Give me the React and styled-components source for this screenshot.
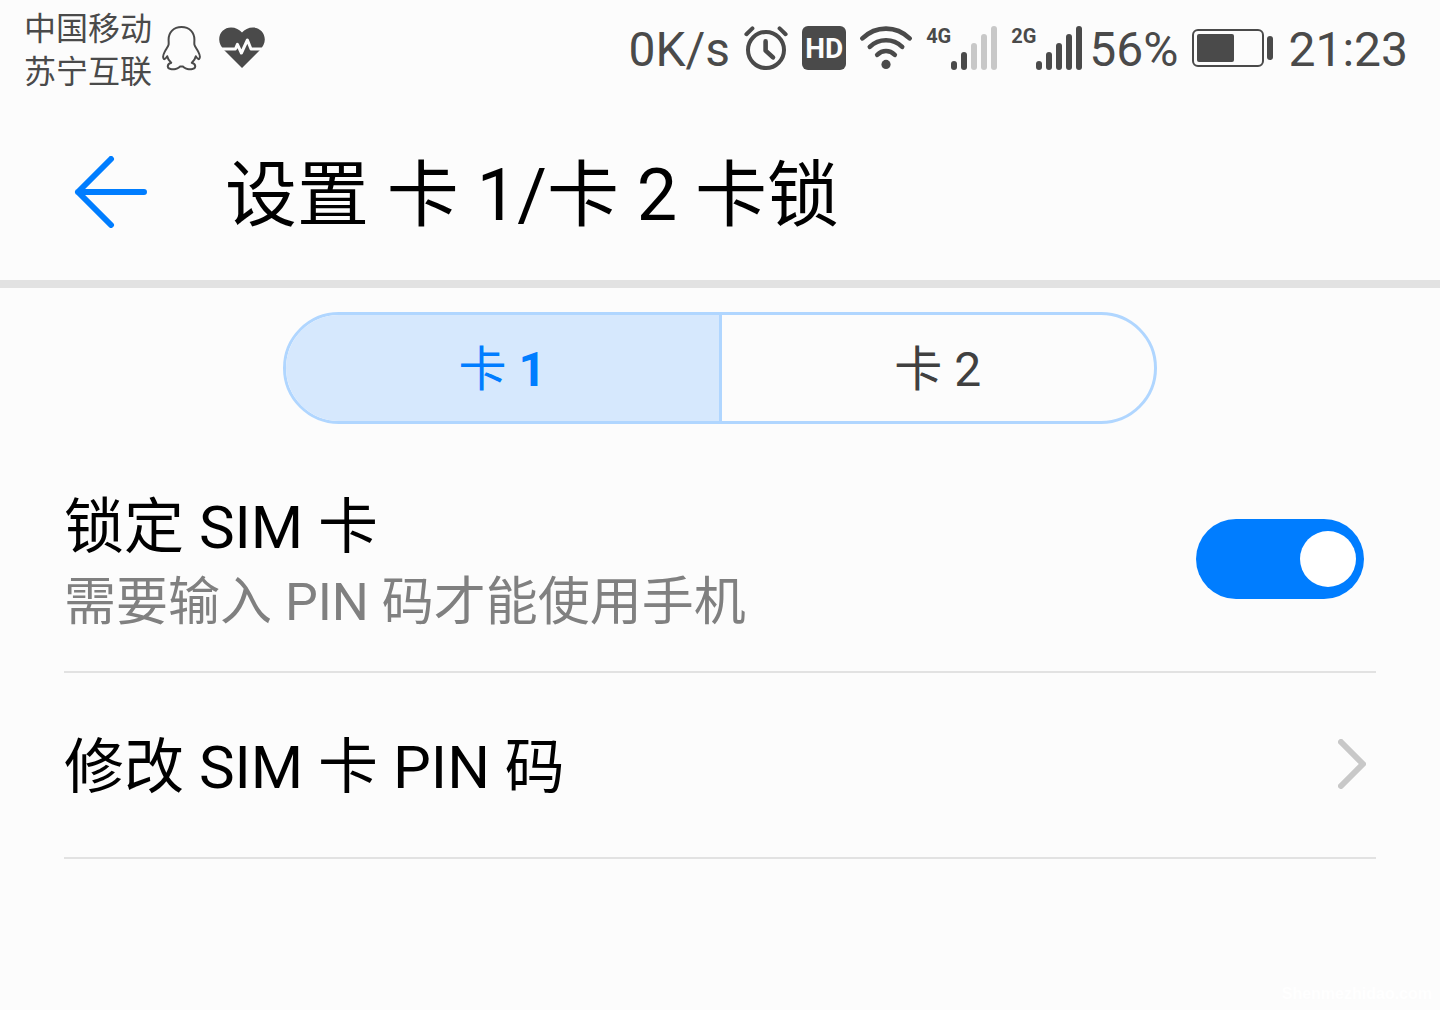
import React, { useState } from "react";
import styled, { createGlobalStyle } from "styled-components";

const tabs = ["1", "2"];

const QQIcon = () => (
  <svg width="39" height="45" viewBox="0 0 39 45" fill="none" stroke="#4a4a4a" strokeWidth="2" strokeLinejoin="round">
    <path d="M19.5 1C11.5 1 6.6 6.4 6.6 13.5C6.6 15.5 6.8 17 6.6 18.6C6.3 20.4 4.4 22.6 2.8 25.6C1 29 .9 32 1.9 33C2.8 33.6 4.3 31.6 5.2 30.2C5.8 33 7.2 35 9.2 36.8C6.8 37.6 5.6 38.8 5.8 40.6C6.2 43.4 10.4 43.6 13.6 43C16.2 42.6 17.2 41 18.4 40.4H20.6C21.8 41 22.8 42.6 25.4 43C28.6 43.6 32.8 43.4 33.2 40.6C33.4 38.8 32.2 37.6 29.8 36.8C31.8 35 33.2 33 33.8 30.2C34.7 31.6 36.2 33.6 37.1 33C38.1 32 38 29 36.2 25.6C34.6 22.6 32.7 20.4 32.4 18.6C32.2 17 32.4 15.5 32.4 13.5C32.4 6.4 27.5 1 19.5 1Z" />
  </svg>
);

const HeartIcon = () => (
  <svg width="46" height="42" viewBox="0 0 46 42">
    <path
      fill="#4a4a4a"
      d="M23 41L5.5 23.5C2 20 .2 16.5 .2 12.6C.2 5.4 5.6.6 12 .6C16.6.6 20.4 2.6 23 5.6C25.6 2.6 29.4.6 34 .6C40.4.6 45.8 5.4 45.8 12.6C45.8 16.5 44 20 40.5 23.5Z"
    />
    <path
      fill="none"
      stroke="#fcfcfc"
      strokeWidth="3"
      strokeLinejoin="round"
      d="M0 22H16.4L18.4 17.4L22.4 26L28.4 13L32 22H46"
    />
  </svg>
);

const AlarmIcon = () => (
  <svg width="44" height="44" viewBox="0 0 44 44" fill="none" stroke="#4a4a4a" strokeLinecap="round" strokeLinejoin="round">
    <circle cx="22" cy="24" r="18" strokeWidth="4" />
    <path strokeWidth="4.6" d="M21.6 15.4V24.6L29 31.4" />
    <path strokeWidth="4" d="M2.4 8.2L8.4 2.4M41.6 8.2L35.6 2.4" />
  </svg>
);

const WifiIcon = () => (
  <svg width="52" height="44" viewBox="0 0 52 44" fill="none" stroke="#4a4a4a" strokeWidth="4.6" strokeLinecap="round">
    <path d="M2.4 12.4C16 -.6 36 -.6 49.6 12.4" />
    <path d="M9.8 20.8C19 12 33 12 42.2 20.8" />
    <path d="M17.2 28.8C22.4 23.8 29.6 23.8 34.8 28.8" />
    <circle cx="26" cy="38.4" r="4.6" fill="#4a4a4a" stroke="none" />
  </svg>
);

const SignalBars = ({ level }) => (
  <svg width="46" height="44" viewBox="0 0 46 44">
    {[9, 18, 27, 36, 44].map((height, i) => (
      <rect key={height} x={i * 10} y={44 - height} width="6" height={height} rx="3" fill={i < level ? "#4a4a4a" : "#c8c8c8"} />
    ))}
  </svg>
);

const BatteryIcon = () => (
  <svg width="82" height="38" viewBox="0 0 82 38">
    <rect x="1" y="1" width="70" height="36" rx="5" fill="none" stroke="#4a4a4a" strokeWidth="2" />
    <rect x="5" y="5" width="37" height="28" rx="2" fill="#4a4a4a" />
    <rect x="75" y="7" width="6" height="24" rx="3" fill="#4a4a4a" />
  </svg>
);

const BackIcon = () => (
  <svg width="73" height="72" viewBox="0 0 73 72" fill="none" stroke="#007dff" strokeWidth="6" strokeLinecap="round" strokeLinejoin="round">
    <path d="M37 3L4 36L37 69M4 36H70" />
  </svg>
);

const ChevronIcon = () => (
  <svg width="28" height="50" viewBox="0 0 28 50" fill="none" stroke="#c8c8c8" strokeWidth="6" strokeLinecap="round" strokeLinejoin="round">
    <path d="M3 3L25 25L3 47" />
  </svg>
);

const App = () => {
  const [activeTab, setActiveTab] = useState("1");
  const [locked, setLocked] = useState(true);

  return (
    <Page>
      <GlobalStyle />
      <StatusBar>
        <Notifications>
          <Carrier>
            <span>中国移动</span>
            <span>苏宁互联</span>
          </Carrier>
          <QQIcon />
          <HeartWrap>
            <HeartIcon />
          </HeartWrap>
        </Notifications>
        <SystemStatus>
          <StatusText>0K/s</StatusText>
          <AlarmIcon />
          <HdBadge>HD</HdBadge>
          <WifiIcon />
          <Signal>
            <Network>4G</Network>
            <SignalBars level={2} />
          </Signal>
          <SignalAndCharge>
            <Signal>
              <Network>2G</Network>
              <SignalBars level={5} />
            </Signal>
            <StatusText>56%</StatusText>
          </SignalAndCharge>
          <BatteryIcon />
          <StatusText>21:23</StatusText>
        </SystemStatus>
      </StatusBar>

      <Header>
        <BackButton type="button" aria-label="返回">
          <BackIcon />
        </BackButton>
        <Title>设置 卡 1/卡 2 卡锁</Title>
      </Header>

      <main>
        <TabList role="tablist">
          {tabs.map((tab) => (
            <Tab
              key={tab}
              type="button"
              role="tab"
              aria-selected={activeTab === tab}
              $active={activeTab === tab}
              onClick={() => setActiveTab(tab)}
            >
              卡 <TabNumber $active={activeTab === tab}>{tab}</TabNumber>
            </Tab>
          ))}
        </TabList>

        <Settings>
          <LockRow htmlFor="simLock">
            <RowText>
              <RowTitle>锁定 SIM 卡</RowTitle>
              <RowHint>需要输入 PIN 码才能使用手机</RowHint>
            </RowText>
            <Switch
              type="checkbox"
              role="switch"
              id="simLock"
              checked={locked}
              onChange={(e) => setLocked(e.target.checked)}
            />
          </LockRow>
          <PinRow type="button">
            <RowTitle>修改 SIM 卡 PIN 码</RowTitle>
            <ChevronWrap>
              <ChevronIcon />
            </ChevronWrap>
          </PinRow>
        </Settings>
      </main>

      <Footer>Shenmezhidao.com</Footer>
    </Page>
  );
};

const GlobalStyle = createGlobalStyle`
  * {
    box-sizing: border-box;
  }

  body {
    margin: 0;
    background: #fcfcfc;
    color: #000;
    font-family: Roboto, "Noto Sans CJK SC", sans-serif;
  }

  button {
    margin: 0;
    padding: 0;
    border: 0;
    background: none;
    color: inherit;
    font: inherit;
    cursor: pointer;
  }

  svg {
    display: block;
    flex-shrink: 0;
  }
`;

const Page = styled.div`
  display: flex;
  flex-direction: column;
  min-height: 100vh;
`;

const StatusBar = styled.div`
  display: flex;
  align-items: center;
  justify-content: space-between;
  height: 96px;
  padding: 0 32px 0 24px;
  color: #4a4a4a;
`;

const Notifications = styled.div`
  display: flex;
  align-items: center;
  gap: 10px;
`;

const SystemStatus = styled.div`
  display: flex;
  align-items: center;
  gap: 14px;
`;

const Carrier = styled.div`
  display: flex;
  flex-direction: column;
  padding-top: 6px;
  font-size: 32px;
  line-height: 43px;
`;

const HeartWrap = styled.span`
  margin-left: 8px;
`;

const StatusText = styled.span`
  padding-top: 4px;
  font-size: 48px;
  line-height: 56px;
`;

const HdBadge = styled.span`
  display: flex;
  align-items: center;
  justify-content: center;
  width: 44px;
  height: 44px;
  border-radius: 6px;
  background: #4a4a4a;
  color: #fcfcfc;
  font-size: 28px;
  font-weight: 700;
`;

const Signal = styled.div`
  display: flex;
  align-items: flex-start;
`;

const SignalAndCharge = styled.div`
  display: flex;
  align-items: center;
  gap: 7px;
`;

const Network = styled.span`
  font-size: 20px;
  font-weight: 700;
  line-height: 20px;
`;

const Header = styled.header`
  display: flex;
  align-items: flex-start;
  gap: 78px;
  padding: 60px 74px 44px;
  border-bottom: 8px solid #e2e2e2;
`;

const BackButton = styled.button`
  flex-shrink: 0;
`;

const Title = styled.h1`
  margin: 0;
  font-size: 72px;
  font-weight: 400;
  line-height: 80px;
`;

const TabList = styled.div`
  display: flex;
  max-width: 874px;
  height: 112px;
  margin: 24px auto 0;
  border: 3px solid #b0d6ff;
  border-radius: 56px;
  overflow: hidden;
`;

const Tab = styled.button`
  flex: 1;
  padding-top: 3px;
  background: ${({ $active }) => ($active ? "#d6e8fd" : "transparent")};
  color: ${({ $active }) => ($active ? "#007dff" : "#404040")};
  font-size: 48px;
  line-height: 56px;

  & + & {
    border-left: 3px solid #b0d6ff;
  }
`;

const TabNumber = styled.span`
  font-weight: ${({ $active }) => ($active ? 700 : 400)};
`;

const Settings = styled.div`
  padding: 0 64px;
`;

const LockRow = styled.label`
  display: flex;
  align-items: center;
  justify-content: space-between;
  padding: 66px 12px 31px 0;
  border-bottom: 2px solid #e2e2e2;
`;

const PinRow = styled.button`
  display: flex;
  align-items: center;
  justify-content: space-between;
  width: 100%;
  padding: 57px 10px 51px 0;
  border-bottom: 2px solid #e2e2e2;
  text-align: left;
`;

const RowText = styled.span`
  display: flex;
  flex-direction: column;
`;

const RowTitle = styled.span`
  font-size: 60px;
  line-height: 76px;
`;

const RowHint = styled.span`
  color: #808080;
  font-size: 52px;
  line-height: 74px;
`;

const Switch = styled.input`
  flex-shrink: 0;
  appearance: none;
  width: 168px;
  height: 80px;
  margin: 0 0 12px;
  padding: 12px 8px;
  border-radius: 40px;
  background: #c8c8c8;
  cursor: pointer;

  &::before {
    content: "";
    display: block;
    width: 56px;
    height: 56px;
    border-radius: 50%;
    background: #fff;
  }

  &:checked {
    background: #007dff;
  }

  &:checked::before {
    margin-left: auto;
  }
`;

const ChevronWrap = styled.span`
  margin-bottom: 8px;
`;

const Footer = styled.footer`
  margin-top: auto;
  padding: 0 8px 6px;
  color: #fff;
  font-family: "Liberation Sans", sans-serif;
  font-size: 16px;
  font-weight: 700;
  line-height: 20px;
  text-align: right;
`;

export default App;
